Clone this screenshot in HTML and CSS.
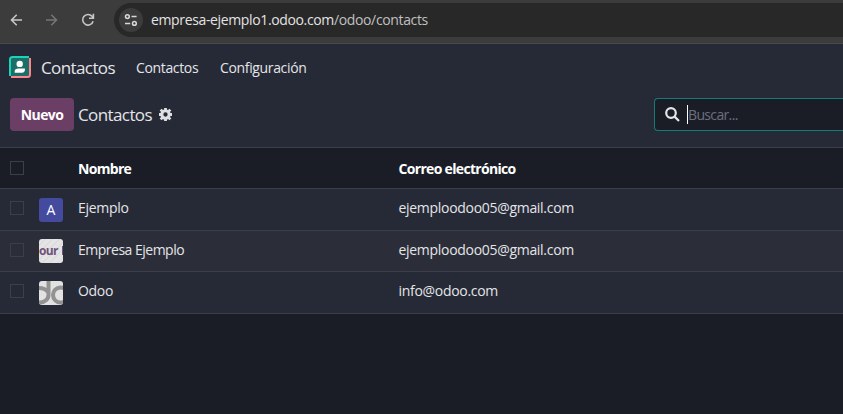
FILE: index.html
```html
<!DOCTYPE html>
<html lang="es">
<head>
<meta charset="utf-8">
<title>Contactos</title>
<link rel="stylesheet" href="styles.css">
</head>
<body>
<div class="browser">
  <svg class="nav-icon back" width="14" height="14" viewBox="0 0 14 14"><path d="M13 7H2.500M7.700 1.800L2.500 7l5.200 5.200"/></svg>
  <svg class="nav-icon forward" width="14" height="14" viewBox="0 0 14 14"><path d="M0 7h10.500M5.300 1.800L10.500 7l-5.200 5.200"/></svg>
  <svg class="nav-icon reload" width="14" height="14" viewBox="0 0 14 14"><path d="M12.100 8.200A5.300 5.300 0 1 1 11 3.300L12.400 5M12.400 .8V5.200H8"/></svg>
  <div class="address">
    <span class="site-info"><svg width="14" height="14" viewBox="0 0 14 14"><circle cx="3.400" cy="3.600" r="1.900"/><path d="M7.500 3.600H12.600M1 10.400H6.200"/><circle cx="10.400" cy="10.400" r="1.900"/></svg></span>
    <span class="url"><span class="host">empresa-ejemplo1.odoo.com</span><span class="path">/odoo/contacts</span></span>
  </div>
</div>
<nav class="navbar">
  <svg class="app-icon" width="22" height="22" viewBox="0 0 22 22">
    <rect x="1" y="1" width="19" height="19" rx="1" fill="#1b6f66"/>
    <path d="M1 20V3.500Q1 1 3.500 1H20" fill="none" stroke="#1ad3bb" stroke-width="2"/>
    <path d="M21 2V18.500Q21 21 18.500 21H2" fill="none" stroke="#fc868b" stroke-width="2"/>
    <circle cx="10.700" cy="7.900" r="3.200" fill="#fff"/>
    <path d="M5.700 16.700v-1.500c0-2 1.500-2.800 3.500-2.800h6.700v1.300c0 2-1.200 3-3 3z" fill="#fff"/>
  </svg>
  <span class="brand">Contactos</span>
  <span class="menu-item contacts">Contactos</span>
  <span class="menu-item config">Configuración</span>
</nav>
<header class="control-panel">
  <button class="new">Nuevo</button>
  <span class="title">Contactos</span>
  <svg class="gear" width="13" height="13" viewBox="0 0 12 12"><circle cx="6" cy="6" r="3.400" fill="none" stroke="#dedfe2" stroke-width="2.800"/><path d="M6 0v2.500M6 9.500V12M0 6h2.500M9.500 6H12M1.500 1.500l2 2M8.500 8.500l2 2M1.500 10.500l2-2M8.500 3.500l2-2" stroke="#dedfe2" stroke-width="2.600"/></svg>
  <div class="search">
    <svg width="15" height="15" viewBox="0 0 15 15"><circle cx="6" cy="6" r="4.800"/><path d="M9.600 9.600L14 14"/></svg>
    <span class="caret"></span><span class="placeholder">Buscar...</span>
  </div>
</header>
<main class="list">
  <div class="row head"><span class="check"></span><span></span><span class="name">Nombre</span><span class="mail">Correo electrónico</span></div>
  <div class="row r1"><span class="check"></span><span class="avatar letter">A</span><span class="name">Ejemplo</span><span class="mail">ejemploodoo05@gmail.com</span></div>
  <div class="row r2"><span class="check"></span><span class="avatar company"><span>our</span><i></i></span><span class="name company-name">Empresa Ejemplo</span><span class="mail">ejemploodoo05@gmail.com</span></div>
  <div class="row r3"><span class="check"></span><span class="avatar"><svg width="24" height="24" viewBox="0 0 24 24" fill="none" stroke="#929292" stroke-width="4"><path d="M9.500 0V14A8.500 7.500 0 0 1 1 21.500H0M0 7Q6 7 9 11"/><circle cx="21.500" cy="14" r="7.500"/></svg></span><span class="name">Odoo</span><span class="mail">info@odoo.com</span></div>
</main>
</body>
</html>
```
FILE: styles.css
```css
* { box-sizing: border-box; }
body { margin: 0; height: 414px; overflow: hidden; background: #1b1d26; color: #e4e5e8; font: 14px/20px "Open Sans", "Noto Sans", sans-serif; white-space: nowrap; }
svg { display: block; flex: none; }
.browser { display: flex; align-items: center; height: 44px; padding: 0 0 4px 9px; background: #3c3c3c; border-bottom: 1px solid #4a4a4a; }
.nav-icon { fill: none; stroke: #c7c7c7; stroke-width: 1.6; }
.forward { stroke: #757575; margin-left: 23px; }
.reload { margin-left: 21px; }
.address { display: flex; align-items: center; flex: 1; height: 34px; margin-left: 19px; padding-left: 5px; background: #282828; border-radius: 17px 0 0 17px; }
.site-info { display: flex; align-items: center; justify-content: center; width: 24px; height: 24px; border-radius: 50%; background: #3c3c3c; }
.site-info svg { fill: none; stroke: #d8d8d8; stroke-width: 1.500; }
.url { margin-left: 8px; letter-spacing: -.36px; }
.host { color: #e3e3e3; }
.path { color: #c0c0c0; }
.navbar { display: flex; align-items: center; height: 45px; padding: 1px 0 0 9px; background: #262a36; }
.brand { width: 95px; margin-left: 10px; padding-top: 1px; font-size: 17px; letter-spacing: -.6px; }
.menu-item { padding-top: 1px; letter-spacing: -.35px; }
.contacts { width: 84px; }
.control-panel { display: flex; align-items: center; height: 59px; padding: 0 0 7px 10px; background: #262a36; border-bottom: 1px solid #3c3e4b; }
.new { width: 64px; height: 33px; padding: 0 0 1px; border: 0; border-radius: 4px; background: #6b3e66; color: #fff; font: 700 14px "Open Sans", sans-serif; letter-spacing: -.6px; }
.title { width: 80px; margin-left: 4px; font-size: 17px; letter-spacing: -.6px; }
.gear { margin-left: 1px; }
.search { display: flex; align-items: center; width: 189px; height: 33px; margin-left: auto; padding-left: 10px; border: 1px solid #147b78; border-right: 0; border-radius: 4px 0 0 4px; background: #1b1d26; }
.search svg { fill: none; stroke: #e4e5e8; stroke-width: 2.200; }
.caret { width: 1px; height: 19px; margin-left: 7px; background: #fff; }
.placeholder { margin-top: 1px; color: #6b707f; letter-spacing: -.65px; }
.row { display: grid; grid-template-columns: 29px 39px 320.500px 1fr; align-items: center; height: 42px; padding: 0 0 3px 10px; background: #262a36; border-bottom: 1px solid #3c3e4b; }
.row.head { height: 41px; padding-bottom: 0; background: #1b1d26; color: #fff; font-weight: 700; }
.row.r2 { height: 41px; padding-bottom: 2px; background: #2b2e39; }
.check { width: 14px; height: 14px; border: 1px solid #3c3e4b; }
.name, .mail { letter-spacing: -.3px; }
.company-name { letter-spacing: -.5px; }
.head .name, .head .mail { padding-top: 2px; letter-spacing: -.68px; }
.avatar { width: 24px; height: 24px; margin-top: 3px; border-radius: 3px; overflow: hidden; background: #e2e2e2; }
.r2 .avatar { margin-top: 1px; }
.letter { background: #444b9f; color: #fff; text-align: center; line-height: 24px; }
.company { display: flex; align-items: center; background: repeating-linear-gradient(135deg, #e4e4e4 0 4px, #dcdcdc 4px 5px); color: #71527a; font-size: 12px; font-weight: 700; line-height: 24px; letter-spacing: -.7px; }
.company i { width: 1px; height: 9px; margin-left: auto; background: #71527a; }
```
